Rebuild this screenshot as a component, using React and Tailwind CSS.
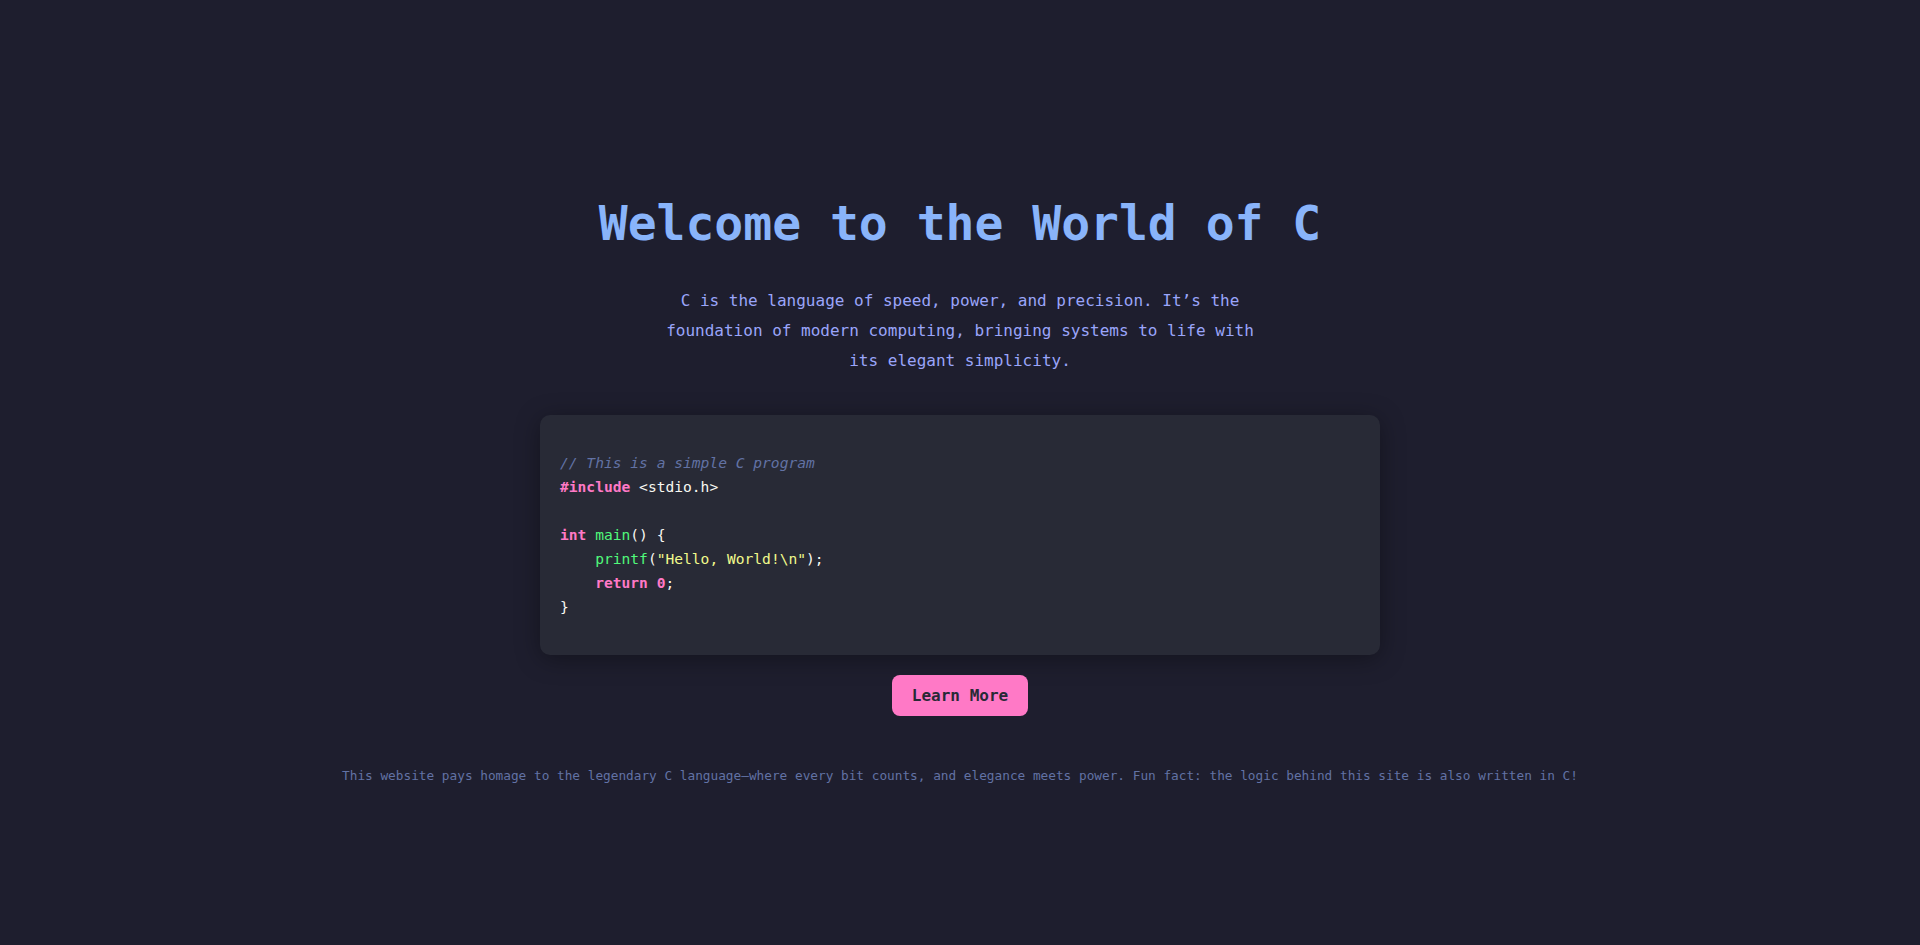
const mono = { fontFamily: '"DejaVu Sans Mono", "Liberation Mono", monospace' }

function CodeBlock() {
  return (
    <pre
      className="w-[840px] rounded-[10px] bg-[#282a36] px-5 pt-9 pb-9 text-[14.6px] leading-6 text-[#f8f8f2] shadow-[0_4px_24px_rgba(0,0,0,0.35)] whitespace-pre"
      style={mono}
    >
      <span className="italic text-[#6272a4]">// This is a simple C program</span>
      {'\n'}
      <span className="font-bold text-[#ff79c6]">#include</span> {'<stdio.h>'}
      {'\n\n'}
      <span className="font-bold text-[#ff79c6]">int</span> <span className="text-[#50fa7b]">main</span>() {'{'}
      {'\n    '}
      <span className="text-[#50fa7b]">printf</span>(<span className="text-[#f1fa8c]">"Hello, World!\n"</span>);
      {'\n    '}
      <span className="font-bold text-[#ff79c6]">return</span> <span className="font-bold text-[#ff79c6]">0</span>;
      {'\n'}
      {'}'}
    </pre>
  )
}

export default function App() {
  return (
    <div className="min-h-[945px] w-full bg-[#1e1e2e] flex flex-col items-center pt-[196px]" style={mono}>
      <h1 className="text-[48px] leading-[55px] font-bold text-[#89b4fa]">
        Welcome to the World of C
      </h1>

      <p className="mt-[35px] max-w-[600px] text-center text-base leading-[30px] text-[#9aa5fa]">
        C is the language of speed, power, and precision. It’s the foundation of modern computing, bringing systems to life with its elegant simplicity.
      </p>

      <div className="mt-[39px]">
        <CodeBlock />
      </div>

      <button className="mt-5 h-[41px] px-5 rounded-lg bg-[#ff79c6] text-base font-semibold text-[#282a36]">
        Learn More
      </button>

      <footer className="mt-[50px] text-[12.75px] leading-5 text-[#6272a4]">
        This website pays homage to the legendary C language—where every bit counts, and elegance meets power. Fun fact: the logic behind this site is also written in C!
      </footer>
    </div>
  )
}
